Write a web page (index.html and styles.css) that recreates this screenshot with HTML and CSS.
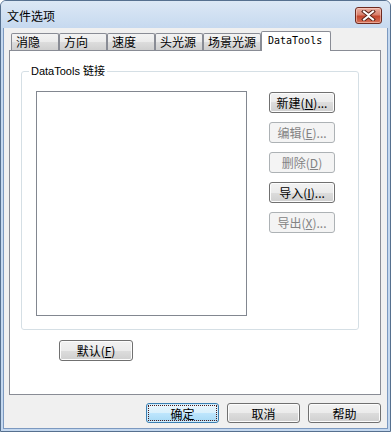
FILE: index.html
```html
<!DOCTYPE html>
<html lang="zh-CN">
<head>
<meta charset="UTF-8" />
<title>文件选项</title>
<link rel="stylesheet" href="styles.css">
</head>
<body>

<div class="window">
  <div class="titlebar">
    <span class="title">文件选项</span>
    <div class="close">
      <svg width="15" height="11" viewBox="0 0 15 11">
        <path d="M3 1.5 L7.5 5 L12 1.5 M3 9.5 L7.5 6 L12 9.5" fill="none" stroke="#5a2318" stroke-width="4" stroke-linecap="square"/>
        <path d="M3 1.5 L7.5 5 L12 1.5 M3 9.5 L7.5 6 L12 9.5" fill="none" stroke="#fff" stroke-width="2" stroke-linecap="square"/>
      </svg>
    </div>
  </div>

  <div class="client">
    <div class="tabs">
      <div class="tab">消隐</div>
      <div class="tab">方向</div>
      <div class="tab">速度</div>
      <div class="tab">头光源</div>
      <div class="tab wide">场景光源</div>
      <div class="tab active">DataTools</div>
    </div>

    <div class="panel">
      <fieldset class="group">
        <legend>DataTools 链接</legend>
        <div class="group-body">
          <div class="listbox"></div>
          <div class="side-buttons">
            <div class="btn">新建(<u>N</u>)...</div>
            <div class="btn disabled">编辑(<u>E</u>)...</div>
            <div class="btn disabled">删除(<u>D</u>)</div>
            <div class="btn">导入(<u>I</u>)...</div>
            <div class="btn disabled">导出(<u>X</u>)...</div>
          </div>
        </div>
      </fieldset>
      <div class="btn reset">默认(<u>F</u>)</div>
    </div>

    <div class="footer">
      <div class="btn wide-btn primary"><span class="focus">确定</span></div>
      <div class="btn wide-btn">取消</div>
      <div class="btn wide-btn">帮助</div>
    </div>
  </div>
</div>

</body>
</html>
```

FILE: styles.css
```css
body {
  margin: 0;
  background: #fff;
  font-family: "Noto Sans CJK SC", "Liberation Sans", sans-serif;
  font-size: 12px;
  color: #000;
}
.window {
  width: 391px;
  height: 432px;
  box-sizing: border-box;
  border: 1px solid #56708f;
  border-radius: 6px 6px 0 0;
  padding: 0 2px 2px 2px;
  background: #c4d8ef;
  display: flex;
  flex-direction: column;
  overflow: hidden;
}
.titlebar {
  height: 27px;
  display: flex;
  align-items: flex-start;
  background: linear-gradient(#dce8f5, #c6d9ef);
  margin: 0 -2px;
  padding: 0 0 0 6px;
}
.title {
  line-height: 15px;
  margin-top: 7px;
  flex: 1;
}
.close {
  width: 25px;
  height: 15px;
  margin: 6px 8px 0 0;
  border: 1px solid #6e2a1f;
  border-radius: 3px;
  background: linear-gradient(#eab0a3, #d9806c 45%, #c4462d 55%, #d5735a);
  box-shadow: inset 0 0 0 1px rgba(255, 220, 210, 0.5);
  display: flex;
  align-items: center;
  justify-content: center;
}
.client {
  flex: 1;
  background: #f0f0f0;
  border: 1px solid #7c99c0;
  border-top: none;
  display: flex;
  flex-direction: column;
}
.tabs {
  display: flex;
  align-items: flex-end;
  height: 19px;
  padding: 3px 0 0 7px;
}
.tab {
  width: 48px;
  height: 17px;
  box-sizing: border-box;
  border: 1px solid #898c95;
  border-bottom: none;
  border-radius: 2px 2px 0 0;
  padding-left: 4px;
  line-height: 16px;
  background: linear-gradient(#f3f3f3, #ebebeb 50%, #dddddd 50%, #cfcfcf);
}
.tab.wide {
  width: 58px;
}
.tab.active {
  width: 70px;
  height: 20px;
  margin-bottom: -1px;
  padding-left: 6px;
  background: #fff;
  position: relative;
  z-index: 1;
  font-family: "DejaVu Sans Mono", monospace;
  font-size: 10px;
  line-height: 18px;
}
.panel {
  width: 372px;
  height: 345px;
  box-sizing: border-box;
  margin-left: 5px;
  border: 1px solid #898c95;
  background: #fff;
}
.group {
  width: 338px;
  box-sizing: border-box;
  margin: 14px 0 0 11px;
  padding: 0;
  border: 1px solid #d5dfe5;
  border-radius: 3px;
}
.group legend {
  margin-left: 7px;
  padding: 0 2px;
  font-family: "Liberation Sans", "Noto Sans CJK SC", sans-serif;
  font-size: 11px;
  line-height: 13px;
}
.group-body {
  display: flex;
  align-items: flex-start;
  padding: 13px 0 13px 14px;
}
.listbox {
  width: 211px;
  height: 225px;
  box-sizing: border-box;
  border: 1px solid #828790;
  background: #fff;
}
.side-buttons {
  display: flex;
  flex-direction: column;
  gap: 9px;
  margin: 1px 0 0 22px;
}
.btn {
  width: 66px;
  height: 21px;
  box-sizing: border-box;
  border: 1px solid #707070;
  border-radius: 3px;
  background: linear-gradient(#f2f2f2, #ebebeb 50%, #dddddd 50%, #cfcfcf);
  box-shadow: inset 0 0 0 1px #fcfcfc;
  display: flex;
  align-items: center;
  justify-content: center;
  line-height: 15px;
  white-space: nowrap;
}
.btn u {
  text-decoration-thickness: 1px;
  text-underline-offset: 1px;
}
.btn.disabled {
  border-color: #adb2b5;
  background: #f4f4f4;
  box-shadow: none;
  color: #838383;
}
.btn.reset {
  width: 74px;
  margin: 10px 0 0 49px;
}
.footer {
  display: flex;
  justify-content: flex-end;
  gap: 8px;
  margin: 8px 6px 0 0;
}
.btn.wide-btn {
  width: 73px;
  height: 20px;
}
.btn.primary {
  border-color: #3c7fb1;
  background: linear-gradient(#eaf6fd, #d9f0fc 50%, #bee6fd 50%, #a7d9f5);
  box-shadow: inset 0 0 0 1px #d0ecfb;
}
.btn.primary .focus {
  flex: 1;
  align-self: stretch;
  margin: 2px;
  outline: 1px dotted #4b1a1a;
  display: flex;
  align-items: center;
  justify-content: center;
}
```
